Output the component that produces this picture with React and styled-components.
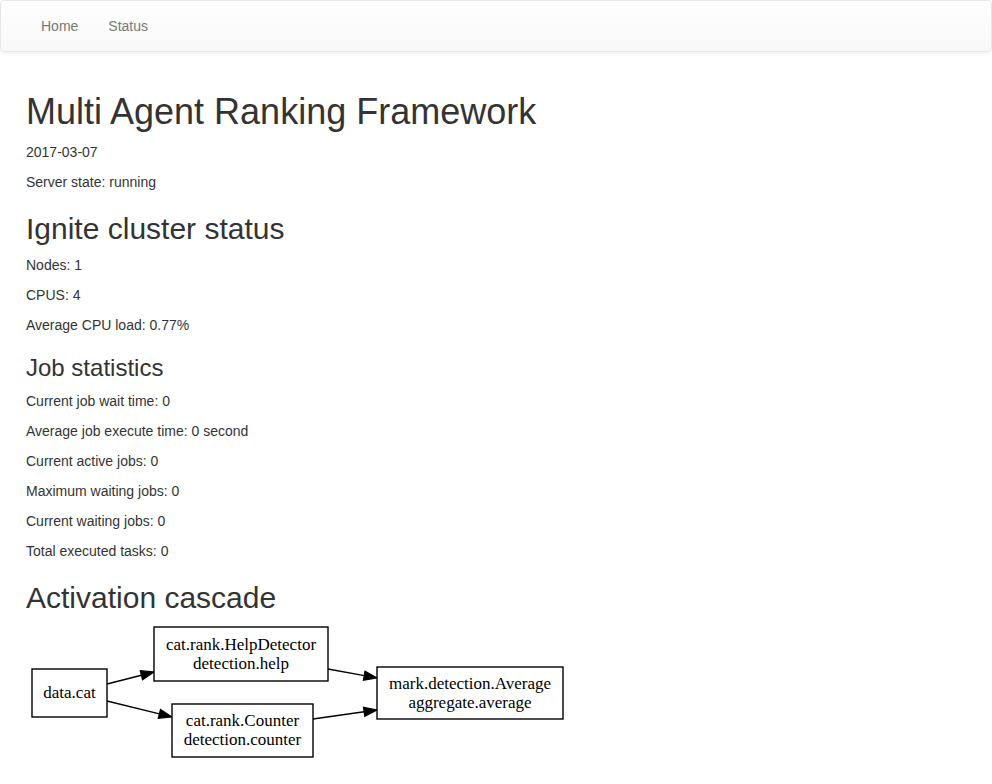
import React from 'react'
import styled, { createGlobalStyle } from 'styled-components'

const GlobalStyle = createGlobalStyle`
  html, body {
    margin: 0;
    padding: 0;
    background: #fff;
  }
  body {
    font-family: "Liberation Sans", Arial, Helvetica, sans-serif;
    font-size: 14px;
    line-height: 1.42857143;
    color: #333;
  }
`

const Navbar = styled.nav`
  min-height: 50px;
  margin-bottom: 20px;
  border: 1px solid #e7e7e7;
  border-radius: 4px;
  background-image: linear-gradient(to bottom, #fff 0, #f8f8f8 100%);
  box-shadow: inset 0 1px 0 rgba(255, 255, 255, 0.15), 0 1px 5px rgba(0, 0, 0, 0.075);
`

const Container = styled.div`
  display: flow-root;
  width: 970px;
  margin: 0 auto;
  padding: 0 15px;
  box-sizing: border-box;
`

const NavList = styled.ul`
  display: flex;
  list-style: none;
  margin: 0;
  padding: 0;
`

const NavLink = styled.a`
  display: block;
  padding: 15px;
  line-height: 20px;
  color: #777;
  text-decoration: none;
  text-shadow: 0 1px 0 rgba(255, 255, 255, 0.25);
`

const Title = styled.h1`
  font-size: 36px;
  font-weight: 500;
  line-height: 1.1;
  margin: 20px 0 10px;
`

const Heading = styled.h2`
  font-size: 30px;
  font-weight: 500;
  line-height: 1.1;
  margin: 20px 0 10px;
`

const SubHeading = styled.h3`
  font-size: 24px;
  font-weight: 500;
  line-height: 1.1;
  margin: 20px 0 10px;
`

const Line = styled.p`
  margin: 0 0 10px;
`

const Graph = styled.svg`
  display: block;
  font-family: "Liberation Serif", "Times New Roman", serif;
  font-size: 17px;
`

const nodes = [
  { x: 6, y: 45, w: 75, h: 48, lines: ['data.cat'] },
  { x: 128, y: 3, w: 174, h: 54, lines: ['cat.rank.HelpDetector', 'detection.help'] },
  { x: 146, y: 80, w: 141, h: 53, lines: ['cat.rank.Counter', 'detection.counter'] },
  { x: 351, y: 43, w: 186, h: 52, lines: ['mark.detection.Average', 'aggregate.average'] },
]

const edges = [
  [81, 60, 128, 48],
  [81, 77, 146, 93],
  [302, 45, 351, 54],
  [287, 95, 351, 86],
]

function Edge({ x1, y1, x2, y2 }) {
  const dx = x2 - x1
  const dy = y2 - y1
  const len = Math.hypot(dx, dy)
  const ux = dx / len
  const uy = dy / len
  const bx = x2 - ux * 13
  const by = y2 - uy * 13
  const px = -uy * 4.6
  const py = ux * 4.6
  return (
    <g>
      <line x1={x1} y1={y1} x2={bx} y2={by} stroke="#000" strokeWidth="1.4" />
      <polygon
        points={`${x2},${y2} ${bx + px},${by + py} ${bx - px},${by - py}`}
        fill="#000"
        stroke="#000"
        strokeWidth="1.2"
        strokeLinejoin="miter"
      />
    </g>
  )
}

function Cascade() {
  return (
    <Graph width="560" height="140" viewBox="0 0 560 140">
      {edges.map(([x1, y1, x2, y2], i) => (
        <Edge key={i} x1={x1} y1={y1} x2={x2} y2={y2} />
      ))}
      {nodes.map((n, i) => {
        const cx = n.x + n.w / 2
        const cy = n.y + n.h / 2
        const top = cy - ((n.lines.length - 1) * 19) / 2
        return (
          <g key={i}>
            <rect x={n.x} y={n.y} width={n.w} height={n.h} fill="#fff" stroke="#000" strokeWidth="1.4" />
            {n.lines.map((t, j) => (
              <text key={j} x={cx} y={top + j * 19 + 5} textAnchor="middle" fill="#000">
                {t}
              </text>
            ))}
          </g>
        )
      })}
    </Graph>
  )
}

export default function App() {
  return (
    <>
      <GlobalStyle />
      <Navbar>
        <Container>
          <NavList>
            <li><NavLink href="#">Home</NavLink></li>
            <li><NavLink href="#">Status</NavLink></li>
          </NavList>
        </Container>
      </Navbar>
      <Container>
        <Title>Multi Agent Ranking Framework</Title>
        <Line>2017-03-07</Line>
        <Line>Server state: running</Line>
        <Heading>Ignite cluster status</Heading>
        <Line>Nodes: 1</Line>
        <Line>CPUS: 4</Line>
        <Line>Average CPU load: 0.77%</Line>
        <SubHeading>Job statistics</SubHeading>
        <Line>Current job wait time: 0</Line>
        <Line>Average job execute time: 0 second</Line>
        <Line>Current active jobs: 0</Line>
        <Line>Maximum waiting jobs: 0</Line>
        <Line>Current waiting jobs: 0</Line>
        <Line>Total executed tasks: 0</Line>
        <Heading>Activation cascade</Heading>
        <Cascade />
      </Container>
    </>
  )
}
